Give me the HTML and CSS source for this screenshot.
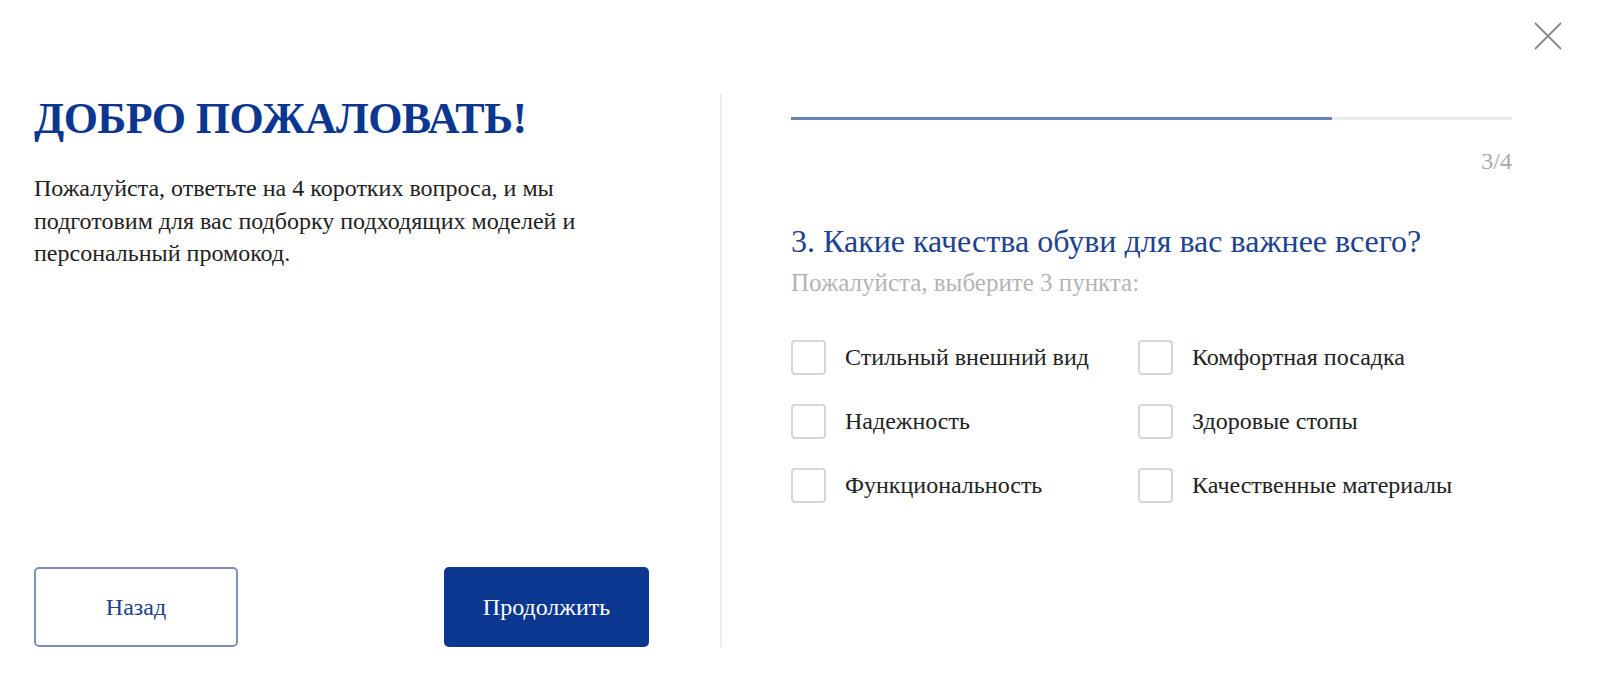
FILE: index.html
```html
<!DOCTYPE html>
<html lang="ru">
<head>
    <meta charset="UTF-8">
    <meta name="viewport" content="width=device-width, initial-scale=1.0">
    <title>Опрос</title>
    <link rel="stylesheet" href="styles.css">
</head>
<body>
    <div class="quiz">
        <button class="close-btn" aria-label="Закрыть">
            <svg width="28" height="28" viewBox="0 0 28 28">
                <path d="M1 1 L27 27 M27 1 L1 27" stroke="#8a8a8a" stroke-width="1.8" fill="none"/>
            </svg>
        </button>

        <div class="quiz-body">
            <div class="intro">
                <h1>ДОБРО ПОЖАЛОВАТЬ!</h1>
                <p class="intro-text">Пожалуйста, ответьте на 4 коротких вопроса, и мы подготовим для вас подборку подходящих моделей и персональный промокод.</p>

                <div class="actions">
                    <button class="btn btn-outline">Назад</button>
                    <button class="btn btn-primary">Продолжить</button>
                </div>
            </div>

            <div class="divider"></div>

            <div class="question">
                <div class="progress">
                    <div class="progress-fill" style="width: 75%;"></div>
                </div>
                <div class="step">3/4</div>

                <h2>3. Какие качества обуви для вас важнее всего?</h2>
                <p class="hint">Пожалуйста, выберите 3 пункта:</p>

                <div class="options">
                    <label class="option"><span class="box"></span>Стильный внешний вид</label>
                    <label class="option"><span class="box"></span>Комфортная посадка</label>
                    <label class="option"><span class="box"></span>Надежность</label>
                    <label class="option"><span class="box"></span>Здоровые стопы</label>
                    <label class="option"><span class="box"></span>Функциональность</label>
                    <label class="option"><span class="box"></span>Качественные материалы</label>
                </div>
            </div>
        </div>
    </div>
</body>
</html>
```

FILE: styles.css
```css
:root {
    --blue: #0b3791;
    --blue-text: #1d4290;
    --text: #222;
    --grey: #a8a8a8;
    --line: #ececec;
}

* {
    margin: 0;
    padding: 0;
    box-sizing: border-box;
}

body {
    font-family: 'Liberation Serif', 'Times New Roman', serif;
    background: white;
    color: var(--text);
}

.quiz {
    position: relative;
    width: 1599px;
    height: 686px;
    padding: 94px 87px 39px 34px;
}

.close-btn {
    position: absolute;
    top: 22px;
    right: 37px;
    background: none;
    border: none;
    cursor: pointer;
    line-height: 0;
}

.quiz-body {
    display: flex;
    height: 100%;
}

.intro {
    width: 615px;
    display: flex;
    flex-direction: column;
}

h1 {
    color: var(--blue);
    font-size: 44px;
    font-weight: bold;
    line-height: 50px;
    letter-spacing: -0.6px;
}

.intro-text {
    margin-top: 28px;
    font-size: 24px;
    line-height: 32.5px;
    width: 590px;
}

.actions {
    margin-top: auto;
    display: flex;
    justify-content: space-between;
}

.btn {
    width: 205px;
    height: 80px;
    border-radius: 5px;
    font-family: inherit;
    font-size: 24px;
    cursor: pointer;
}

.btn-outline {
    width: 204px;
    background: white;
    border: 2px solid #7f8fbb;
    color: var(--blue-text);
}

.btn-primary {
    background: var(--blue);
    border: none;
    color: white;
}

.divider {
    width: 2px;
    background: var(--line);
    margin: 0 69px 0 71px;
}

.question {
    flex: 1;
    padding-top: 23px;
}

.progress {
    height: 3px;
    background: var(--line);
}

.progress-fill {
    height: 100%;
    background: #6985b7;
}

.step {
    text-align: right;
    color: var(--grey);
    font-size: 24px;
    line-height: 30px;
    margin-top: 26px;
}

h2 {
    color: var(--blue-text);
    font-size: 32px;
    font-weight: normal;
    line-height: 40px;
    margin-top: 45px;
}

.hint {
    color: #b4b4b4;
    font-size: 25px;
    line-height: 30px;
    margin-top: 7px;
}

.options {
    display: grid;
    grid-template-columns: 347px 1fr;
    row-gap: 29px;
    margin-top: 42px;
}

.option {
    display: flex;
    align-items: center;
    gap: 19px;
    font-size: 24px;
    line-height: 35px;
    cursor: pointer;
}

.box {
    width: 35px;
    height: 35px;
    border: 2px solid #d6d6d6;
    border-radius: 4px;
    flex-shrink: 0;
}
```
